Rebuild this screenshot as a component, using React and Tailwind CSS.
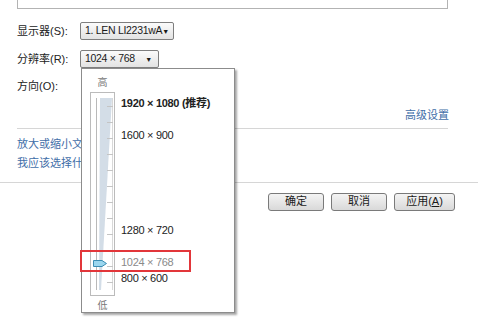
import React from 'react'

const font = { fontFamily: '"Liberation Sans", "Noto Sans CJK SC", sans-serif' }

const Select = ({ label, width }) => (
  <div
    className={`${width} h-[18px] flex items-center justify-between pl-[4px] pr-[6px] border border-[#7e7e7e] rounded-[2px] bg-gradient-to-b from-[#fbfbfb] to-[#e3e3e3] text-[10.5px] tracking-[-0.3px] text-[#1a1a1a] whitespace-nowrap`}
  >
    <span>{label}</span>
    <span className="text-[7px] leading-none">▼</span>
  </div>
)

const Button = ({ children }) => (
  <div className="h-[18px] flex items-center justify-center border border-[#7a7a7a] rounded-[3px] bg-gradient-to-b from-[#f4f4f4] to-[#d9d9d9] text-[11px] text-[#1a1a1a]">
    {children}
  </div>
)

const Slider = () => {
  const ticks = []
  for (let y = 14; y < 196; y += 16) ticks.push(y)
  return (
    <svg width="26" height="205" viewBox="0 0 26 205" className="block">
      <rect x="0.5" y="0.5" width="24" height="203" fill="white" stroke="#777" strokeDasharray="1 1" />
      <line x1="6.5" y1="6" x2="6.5" y2="198" stroke="#b9b9b9" />
      <polygon points="10,6 22,6 11,198 9,198" fill="#d3dde7" />
      <line x1="22.5" y1="6" x2="22.5" y2="198" stroke="#d8d8d8" />
      {ticks.map((t) => (
        <line key={t} x1="17" y1={t + 0.5} x2="23" y2={t + 0.5} stroke="#c4c4c4" />
      ))}
      <path d="M3.5 168.5 H12 L16.5 171.5 L12 174.5 H3.5 Z" fill="#9bd6ee" stroke="#3b8db3" />
    </svg>
  )
}

export default function App() {
  return (
    <div className="relative w-[486px] h-[318px] overflow-hidden bg-white" style={font}>
      <div className="ml-[17px] w-[431px] h-[9px] border border-t-0 border-[#b3b3b3]" />

      <div className="ml-[17px] mt-[13px] flex items-center h-[18px]">
        <span className="w-[63px] text-[11px] text-[#222]">显示器(S):</span>
        <Select label="1. LEN LI2231wA" width="w-[94px]" />
      </div>
      <div className="ml-[17px] mt-[10px] flex items-center h-[18px]">
        <span className="w-[63px] text-[11px] text-[#222]">分辨率(R):</span>
        <Select label="1024 × 768" width="w-[79px]" />
      </div>
      <div className="ml-[17px] mt-[9px] h-[18px] flex items-center text-[11px] text-[#222]">方向(O):</div>

      <div className="mt-[12px] w-[449px] flex justify-end text-[11px] text-[#3f6ea8]">高级设置</div>
      <div className="ml-[17px] mt-[4px] w-[431px] h-px bg-[#d6d6d6]" />

      <div className="ml-[17px] mt-[7px] flex flex-col items-start gap-[3px] text-[11px] text-[#3f6ea8] whitespace-nowrap">
        <span>放大或缩小文本和其他项目</span>
        <span>我应该选择什么显示器设置？</span>
      </div>
      <div className="mt-[10px] w-[478px] h-px bg-[#d6d6d6]" />

      <div className="mt-[10px] ml-[268px] grid grid-cols-[56px_56px_61px] gap-[7px]">
        <Button>确定</Button>
        <Button>取消</Button>
        <Button>应用(<span className="underline">A</span>)</Button>
      </div>

      {/* dropdown popup */}
      <div className="absolute left-[81px] top-[68px] w-[154px] h-[245px] bg-white border border-[#8c8c8c] shadow-[2px_2px_2px_rgba(0,0,0,0.35)] flex">
        <div className="w-[34px] flex flex-col items-center pl-[7px]">
          <span className="mt-[6px] h-[16px] text-[10px] text-[#777] leading-[16px]">高</span>
          <div className="mt-[1px]">
            <Slider />
          </div>
          <span className="mt-[2px] text-[10px] text-[#777] leading-[14px]">低</span>
        </div>
        <div className="relative flex-1 text-[11px] tracking-[-0.3px] text-[#222] whitespace-nowrap">
          <span className="absolute left-[5px] top-[26px] font-bold">1920 × 1080 (推荐)</span>
          <span className="absolute left-[5px] top-[58px]">1600 × 900</span>
          <span className="absolute left-[5px] top-[153px]">1280 × 720</span>
          <span className="absolute left-[5px] top-[185px] text-[#8a8a8a]">1024 × 768</span>
          <span className="absolute left-[5px] top-[201px]">800 × 600</span>
        </div>
      </div>

      {/* highlight */}
      <div className="absolute left-[80px] top-[250px] w-[111px] h-[22px] border-[2.5px] border-[#e2363a]" />
    </div>
  )
}
